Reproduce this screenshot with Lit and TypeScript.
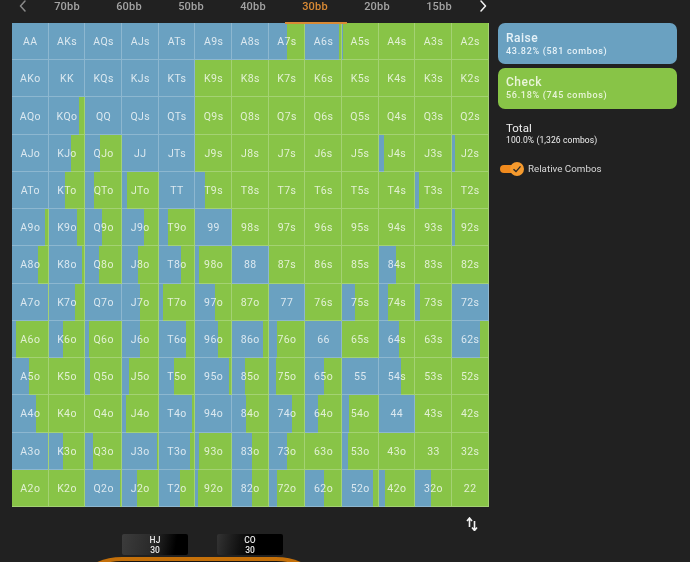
import { LitElement, css, html, svg } from 'lit'
import { customElement } from 'lit/decorators.js'

const RANKS = ['A', 'K', 'Q', 'J', 'T', '9', '8', '7', '6', '5', '4', '3', '2']
const STACKS = ['70bb', '60bb', '50bb', '40bb', '30bb', '20bb', '15bb']
const BLUE = '#6aa1c1'
const GREEN = '#88c447'

// raise share of every cell, read left to right
const RAISE = [
  [1, 1, 1, 1, 1, 1, 1, 0.5, 0.93, 0.03, 0, 0, 0],
  [1, 1, 1, 1, 1, 0, 0, 0, 0, 0, 0, 0, 0],
  [1, 0.82, 1, 1, 1, 0, 0, 0, 0, 0, 0, 0, 0],
  [1, 0.6, 0.4, 1, 1, 0, 0, 0, 0, 0, 0.15, 0, 0.08],
  [1, 0.45, 0.25, 0.13, 1, 0.27, 0, 0, 0, 0, 0, 0.12, 0],
  [0.88, 0.77, 0.45, 0.6, 0.25, 1, 0, 0, 0, 0, 0, 0, 0.08],
  [0.7, 0.93, 0.37, 0.43, 0.6, 0.1, 1, 0, 0, 0, 0.48, 0, 0],
  [0.96, 0.73, 1, 0.48, 0.12, 0.55, 0, 1, 0, 0.35, 0.25, 0.14, 1],
  [0.1, 0.4, 0.1, 0.5, 0.75, 0.63, 0.85, 0.23, 1, 0, 0.55, 0, 0.75],
  [0.46, 0, 0.13, 0.2, 0.43, 0.93, 0.35, 0.2, 0.5, 1, 0.6, 0, 0],
  [0.65, 0, 0, 0.1, 0.92, 1, 0.38, 0.65, 0.35, 0.2, 1, 0, 0],
  [0.97, 0.4, 0.22, 0.95, 0.87, 0.1, 0.55, 0.5, 0, 0.15, 0, 0, 0],
  [0, 0, 0.95, 0.4, 0.57, 0.08, 0.55, 0.22, 0.5, 0.85, 0.18, 0.43, 0],
]

function handName(row: number, col: number): string {
  if (row === col) return RANKS[row] + RANKS[row]
  if (col > row) return RANKS[row] + RANKS[col] + 's'
  return RANKS[col] + RANKS[row] + 'o'
}

function cellStyle(share: number): string {
  const percent = share * 100
  return `background:linear-gradient(90deg,${BLUE} ${percent}%,${GREEN} ${percent}%)`
}

const chevron = (d: string) => svg`<svg class="chevron" viewBox="0 0 10 14"><path d=${d}></path></svg>`

@customElement('app-root')
export class AppRoot extends LitElement {
  static styles = css`
    :host {
      display: block;
      width: 690px;
      height: 562px;
      overflow: hidden;
      background: #212121;
      color: #fff;
      font-family: Roboto, 'Liberation Sans', sans-serif;
    }

    .page {
      height: 562px;
      /* the source is a video frame, everything is a touch soft */
      filter: blur(0.4px);
    }

    .stacks {
      display: flex;
      align-items: center;
      height: 12px;
      padding: 0 0 0 18px;
      margin-bottom: 11px;
    }

    .chevron {
      width: 10px;
      height: 14px;
      fill: none;
      stroke: currentColor;
      stroke-width: 1.5;
      stroke-linecap: round;
      stroke-linejoin: round;
    }

    .prev {
      color: #8a8a8a;
      margin-right: 8px;
      display: flex;
    }

    .next {
      color: #f2f2f2;
      margin-left: 8px;
      display: flex;
    }

    .stack {
      width: 62px;
      text-align: center;
      font-size: 11px;
      font-weight: 500;
      letter-spacing: 0.2px;
      color: #a3a3a3;
    }

    .stack.active {
      color: #d98a35;
    }

    .main {
      display: flex;
      align-items: flex-start;
      padding-left: 12px;
      gap: 9.5px;
    }

    .board {
      position: relative;
      display: grid;
      grid-template-columns: repeat(13, 1fr);
      grid-template-rows: repeat(13, 1fr);
      width: 476.5px;
      height: 484px;
      flex: none;
    }

    .marker {
      position: absolute;
      top: -1px;
      left: 273px;
      width: 62px;
      height: 2px;
      background: #d98a35;
    }

    .cell {
      display: flex;
      align-items: center;
      justify-content: center;
      font-size: 10.5px;
      letter-spacing: 0.4px;
      color: rgba(255, 255, 255, 0.76);
      box-shadow: inset -1px -1px 0 rgba(255, 255, 255, 0.24);
    }

    .side {
      width: 179px;
      display: flex;
      flex-direction: column;
    }

    .action {
      height: 41px;
      box-sizing: border-box;
      border-radius: 7px;
      padding: 8.5px 8px 0;
      margin-bottom: 3.5px;
      font-weight: 500;
    }

    .raise {
      background: #6aa1c1;
      color: #e6f2f8;
    }

    .check {
      background: #88c447;
      color: #e9f5d8;
    }

    .title {
      font-size: 12px;
      line-height: 13px;
      letter-spacing: 0.5px;
    }

    .detail {
      font-size: 9px;
      line-height: 13px;
      letter-spacing: 0.7px;
    }

    .total {
      padding: 10px 8px 0;
      color: #f0f0f0;
    }

    .total .title {
      font-size: 11.5px;
      line-height: 12px;
      letter-spacing: 0;
      font-weight: 400;
    }

    .total .detail {
      font-size: 8.5px;
      line-height: 12px;
      letter-spacing: 0.1px;
    }

    .relative {
      display: flex;
      align-items: center;
      margin: 17px 0 0 2px;
      font-size: 9.8px;
      color: #d8d8d8;
    }

    .toggle {
      position: relative;
      width: 20px;
      height: 8px;
      border-radius: 4px;
      background: #f08a1d;
      margin-right: 8px;
    }

    .knob {
      position: absolute;
      right: -4px;
      top: -3px;
      width: 14px;
      height: 14px;
      border-radius: 50%;
      background: #f59a2e;
      display: flex;
      align-items: center;
      justify-content: center;
    }

    .knob svg {
      width: 10px;
      height: 10px;
      fill: none;
      stroke: #2a2a2a;
      stroke-width: 1.4;
    }

    .tools {
      display: flex;
      justify-content: flex-end;
      width: 478px;
      height: 27px;
      padding-top: 10px;
      box-sizing: border-box;
    }

    .tools svg {
      width: 12px;
      height: 14px;
      fill: none;
      stroke: #f2f2f2;
      stroke-width: 1.6;
    }

    .seats {
      display: flex;
      gap: 29px;
      padding-left: 122px;
    }

    .seat {
      width: 66px;
      height: 21px;
      border-radius: 2px;
      background: linear-gradient(100deg, #3c3c3c 0%, #2a2a2a 45%, #000 80%);
      text-align: center;
      font-size: 8.5px;
      line-height: 10px;
      padding-top: 1px;
      box-sizing: border-box;
      font-weight: 500;
      color: #e8e8e8;
    }

    .seat + .seat {
      background: linear-gradient(100deg, #333 0%, #111 35%, #000 60%);
    }

    .table {
      width: 222px;
      height: 40px;
      margin: 2px 0 0 88px;
      box-sizing: border-box;
      border-top: 4px solid #c4700a;
      border-left: 4px solid #c4700a;
      border-right: 4px solid #c4700a;
      border-radius: 34px 34px 0 0 / 16px 16px 0 0;
      background: #141414;
    }
  `

  render() {
    return html`
      <div class="page">
        <div class="stacks">
          <span class="prev">${chevron('M7 2 L2.5 7 L7 12')}</span>
          ${STACKS.map((stack) => html`<span class="stack ${stack === '30bb' ? 'active' : ''}">${stack}</span>`)}
          <span class="next">${chevron('M3 2 L7.5 7 L3 12')}</span>
        </div>

        <div class="main">
          <div class="board">
            ${RAISE.map((row, r) => row.map((share, c) => html`
              <div class="cell" style=${cellStyle(share)}>${handName(r, c)}</div>
            `))}
            <div class="marker"></div>
          </div>

          <div class="side">
            <div class="action raise">
              <div class="title">Raise</div>
              <div class="detail">43.82% (581 combos)</div>
            </div>
            <div class="action check">
              <div class="title">Check</div>
              <div class="detail">56.18% (745 combos)</div>
            </div>
            <div class="total">
              <div class="title">Total</div>
              <div class="detail">100.0% (1,326 combos)</div>
            </div>
            <div class="relative">
              <span class="toggle">
                <span class="knob"><svg viewBox="0 0 10 10"><path d="M1.5 5.2 L4 7.6 L8.5 2.4"></path></svg></span>
              </span>
              Relative Combos
            </div>
          </div>
        </div>

        <div class="tools">
          <svg viewBox="0 0 12 14">
            <path d="M3.5 10 V1.5 M1 4 L3.5 1 L6 4"></path>
            <path d="M8.5 4 V13 M6 10.5 L8.5 13.5 L11 10.5"></path>
          </svg>
        </div>

        <div class="seats">
          <div class="seat">HJ<br />30</div>
          <div class="seat">CO<br />30</div>
        </div>
        <div class="table"></div>
      </div>
    `
  }
}
